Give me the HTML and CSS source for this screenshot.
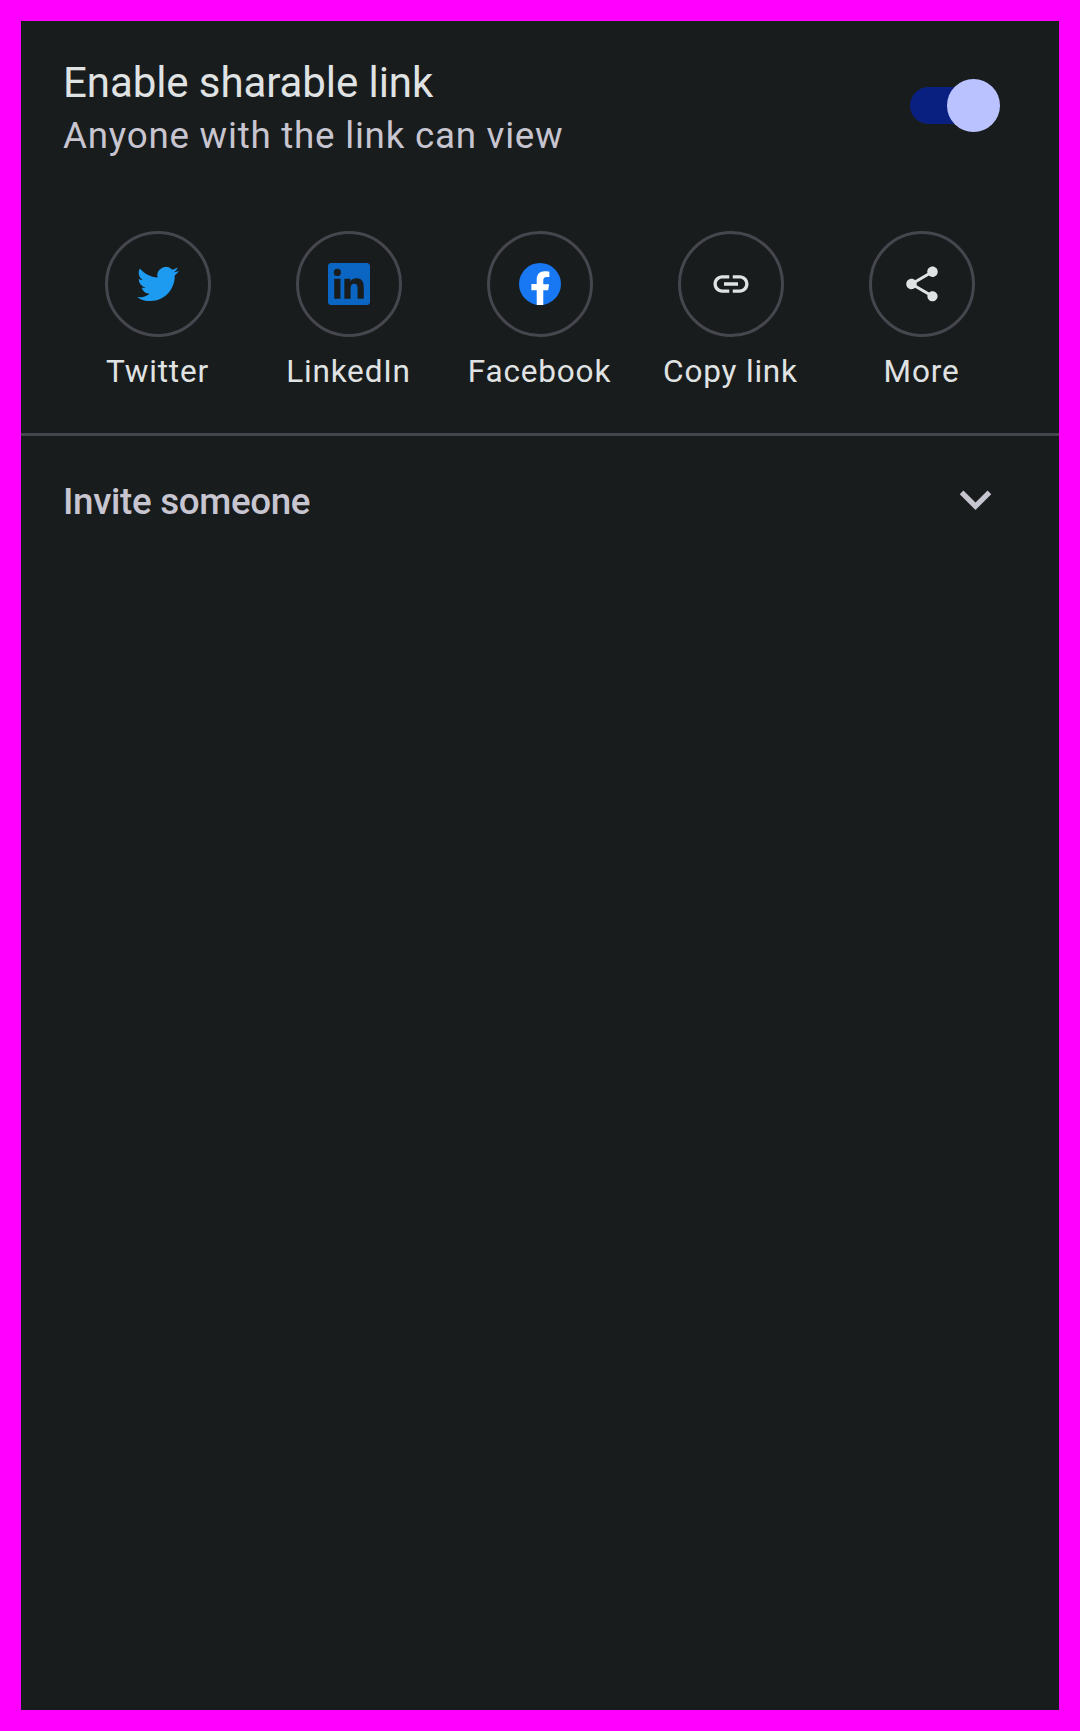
FILE: index.html
```html
<!DOCTYPE html>
<html lang="en">
<head>
<meta charset="utf-8">
<title>Share</title>
<link rel="stylesheet" href="styles.css">
</head>
<body>
<main class="sheet">
  <section class="link-setting">
    <div class="link-text">
      <h1 class="title">Enable sharable link</h1>
      <p class="subtitle">Anyone with the link can view</p>
    </div>
    <div class="switch" role="switch" aria-checked="true" aria-label="Enable sharable link"><span class="thumb"></span></div>
  </section>
  <nav class="targets">
    <a class="target">
      <span class="ring"><svg class="icon twitter" viewBox="0 0 24 24"><path d="M23.953 4.57a10 10 0 01-2.825.775 4.958 4.958 0 002.163-2.723c-.951.555-2.005.959-3.127 1.184a4.92 4.92 0 00-8.384 4.482C7.69 8.095 4.067 6.13 1.64 3.162a4.822 4.822 0 00-.666 2.475c0 1.71.87 3.213 2.188 4.096a4.904 4.904 0 01-2.228-.616v.06a4.923 4.923 0 003.946 4.827 4.996 4.996 0 01-2.212.085 4.936 4.936 0 004.604 3.417 9.867 9.867 0 01-6.102 2.105c-.39 0-.779-.023-1.17-.067a13.995 13.995 0 007.557 2.209c9.053 0 13.998-7.496 13.998-13.985 0-.21 0-.42-.015-.63A9.935 9.935 0 0024 4.59z"/></svg></span>
      <span class="label">Twitter</span>
    </a>
    <a class="target">
      <span class="ring"><svg class="icon linkedin" viewBox="0 0 24 24"><path d="M20.447 20.452h-3.554v-5.569c0-1.328-.027-3.037-1.852-3.037-1.853 0-2.136 1.445-2.136 2.939v5.667H9.351V9h3.414v1.561h.046c.477-.9 1.637-1.85 3.37-1.85 3.601 0 4.267 2.37 4.267 5.455v6.286zM5.337 7.433a2.062 2.062 0 01-2.063-2.065 2.064 2.064 0 112.063 2.065zm1.782 13.019H3.555V9h3.564v11.452zM22.225 0H1.771C.792 0 0 .774 0 1.729v20.542C0 23.227.792 24 1.771 24h20.451C23.2 24 24 23.227 24 22.271V1.729C24 .774 23.2 0 22.222 0h.003z"/></svg></span>
      <span class="label">LinkedIn</span>
    </a>
    <a class="target">
      <span class="ring"><svg class="icon" viewBox="0 0 24 24"><circle class="fb-disc" cx="12" cy="12" r="12"/><path class="fb-mark" d="M10.125 24v-8.46H7.078v-3.47h3.047V9.43c0-3.007 1.792-4.669 4.533-4.669 1.312 0 2.686.235 2.686.235v2.953H15.83c-1.491 0-1.956.925-1.956 1.874v2.25h3.328l-.532 3.47h-2.796V24z"/></svg></span>
      <span class="label">Facebook</span>
    </a>
    <a class="target">
      <span class="ring"><svg class="icon" viewBox="0 0 24 24"><path d="M3.9 12c0-1.71 1.39-3.1 3.1-3.1h4V7H7c-2.76 0-5 2.24-5 5s2.24 5 5 5h4v-1.9H7c-1.71 0-3.1-1.39-3.1-3.1zM8 13h8v-2H8v2zm9-6h-4v1.9h4c1.71 0 3.1 1.39 3.1 3.1s-1.39 3.1-3.1 3.1h-4V17h4c2.76 0 5-2.24 5-5s-2.24-5-5-5z"/></svg></span>
      <span class="label">Copy link</span>
    </a>
    <a class="target">
      <span class="ring"><svg class="icon" viewBox="0 0 24 24"><path d="M18 16.08c-.76 0-1.44.3-1.96.77L8.91 12.7c.05-.23.09-.46.09-.7s-.04-.47-.09-.7l7.05-4.11c.54.5 1.25.81 2.04.81 1.66 0 3-1.34 3-3s-1.34-3-3-3-3 1.34-3 3c0 .24.04.47.09.7L8.04 9.81C7.5 9.31 6.79 9 6 9c-1.66 0-3 1.34-3 3s1.34 3 3 3c.79 0 1.5-.31 2.04-.81l7.12 4.16c-.05.21-.08.43-.08.65 0 1.61 1.31 2.92 2.92 2.92s2.92-1.31 2.92-2.92-1.31-2.92-2.92-2.92z"/></svg></span>
      <span class="label">More</span>
    </a>
  </nav>
  <section class="invite">
    <h2 class="invite-title">Invite someone</h2>
    <svg class="chevron" viewBox="0 0 24 24"><path d="M16.59 8.59L12 13.17 7.41 8.59 6 10l6 6 6-6z"/></svg>
  </section>
</main>
</body>
</html>
```
FILE: styles.css
```css
* {
  box-sizing: border-box;
}

body {
  margin: 0;
  padding: 21px;
  background: #ff00ff;
  font-family: Roboto, sans-serif;
}

.sheet {
  height: 1689px;
  background: #191c1d;
  color: #e0e3e3;
}

.link-setting {
  display: flex;
  justify-content: space-between;
  align-items: flex-start;
  height: 210px;
  padding: 30px 59px 0 42px;
}

.title,
.subtitle,
.invite-title {
  margin: 0;
  white-space: nowrap;
}

.title {
  font-size: 42px;
  font-weight: 400;
  line-height: 63px;
  letter-spacing: -0.08px;
}

.subtitle {
  color: #c7c5d0;
  font-size: 36.75px;
  line-height: 44px;
  letter-spacing: 0.76px;
}

.switch {
  display: flex;
  justify-content: flex-end;
  align-items: center;
  width: 90px;
  height: 37px;
  margin-top: 36px;
  border-radius: 19px;
  background: linear-gradient(to right, #0a2080 0 70px, transparent 70px);
}

.thumb {
  flex: none;
  width: 53px;
  height: 53px;
  border-radius: 50%;
  background: #bac3ff;
}

.targets {
  display: flex;
  justify-content: center;
  height: 205px;
  border-bottom: 3px solid #46464f;
}

.target {
  display: flex;
  flex-direction: column;
  align-items: center;
  width: 191px;
}

.ring {
  display: flex;
  align-items: center;
  justify-content: center;
  width: 106px;
  height: 106px;
  border: 3px solid #46464f;
  border-radius: 50%;
}

.icon {
  width: 42px;
  height: 42px;
  fill: #e0e3e3;
}

.twitter {
  fill: #1d9bf0;
}

.linkedin {
  fill: #0a66c2;
}

.fb-disc {
  fill: #1877f2;
}

.fb-mark {
  fill: #fff;
}

.label {
  margin-top: 14px;
  padding-right: 1px;
  font-size: 31.5px;
  line-height: 42px;
  letter-spacing: 0.82px;
  white-space: nowrap;
}

.invite {
  display: flex;
  justify-content: space-between;
  align-items: flex-start;
  padding: 32px 52px 0 42px;
  color: #c7c5d0;
}

.invite-title {
  margin-top: 8px;
  font-size: 36.75px;
  font-weight: 500;
  line-height: 52px;
  letter-spacing: -0.34px;
}

.chevron {
  width: 63px;
  height: 63px;
  fill: currentColor;
}
```
